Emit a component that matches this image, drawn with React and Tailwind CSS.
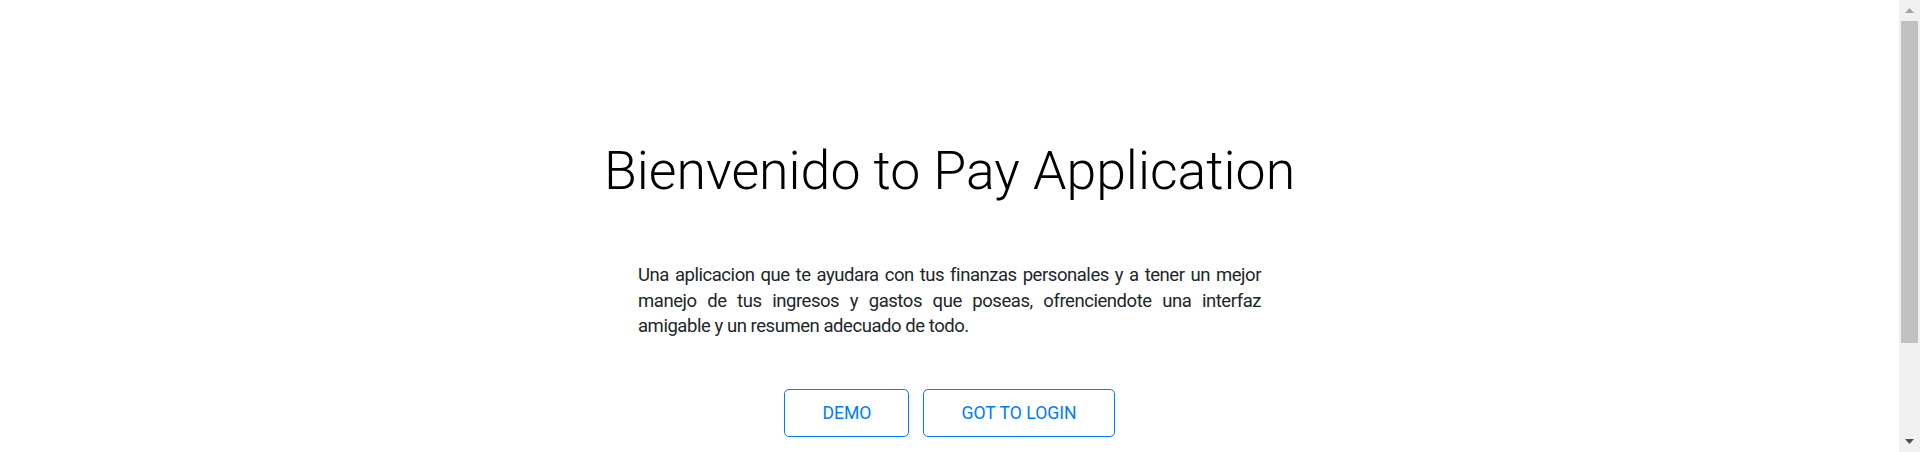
const Scrollbar = () => (
  <div className="w-[21px] shrink-0 bg-[#f1f1f1] flex flex-col">
    <div className="h-[21px] flex items-center justify-center">
      <svg width="9" height="5" viewBox="0 0 9 5">
        <polygon points="0,5 4.5,0 9,5" fill="#a3a3a3" />
      </svg>
    </div>
    <div className="flex-1 px-[2px]">
      <div className="h-[322px] bg-[#c1c1c1]" />
    </div>
    <div className="h-[21px] flex items-center justify-center">
      <svg width="9" height="5" viewBox="0 0 9 5">
        <polygon points="0,0 9,0 4.5,5" fill="#505050" />
      </svg>
    </div>
  </div>
);

const App = () => {
  return (
    <div className="h-[452px] overflow-hidden bg-white flex">
      <div className="flex-1 font-['Roboto',sans-serif] flex flex-col items-center pt-[139px]">
        <h1 className="text-[53.6px] leading-[1.2] font-light text-black">
          Bienvenido to Pay Application
        </h1>
        <p className="mt-[60px] w-[623px] text-[18.5px] leading-[25.5px] tracking-[-0.45px] text-[#212529] text-justify">
          Una aplicacion que te ayudara con tus finanzas personales y a tener un mejor manejo de tus
          ingresos y gastos que poseas, ofrenciendote una interfaz amigable y un resumen adecuado de
          todo.
        </p>
        <div className="mt-[49px] flex gap-[14px]">
          <button className="border border-[#007bff] text-[#007bff] rounded-[5px] px-[37px] py-[10px] text-[17.6px] leading-[1.5] hover:bg-[#007bff] hover:text-white">
            DEMO
          </button>
          <button className="border border-[#007bff] text-[#007bff] rounded-[5px] px-[37px] py-[10px] text-[17.6px] leading-[1.5] hover:bg-[#007bff] hover:text-white">
            GOT TO LOGIN
          </button>
        </div>
      </div>
      <Scrollbar />
    </div>
  );
};

export default App;
